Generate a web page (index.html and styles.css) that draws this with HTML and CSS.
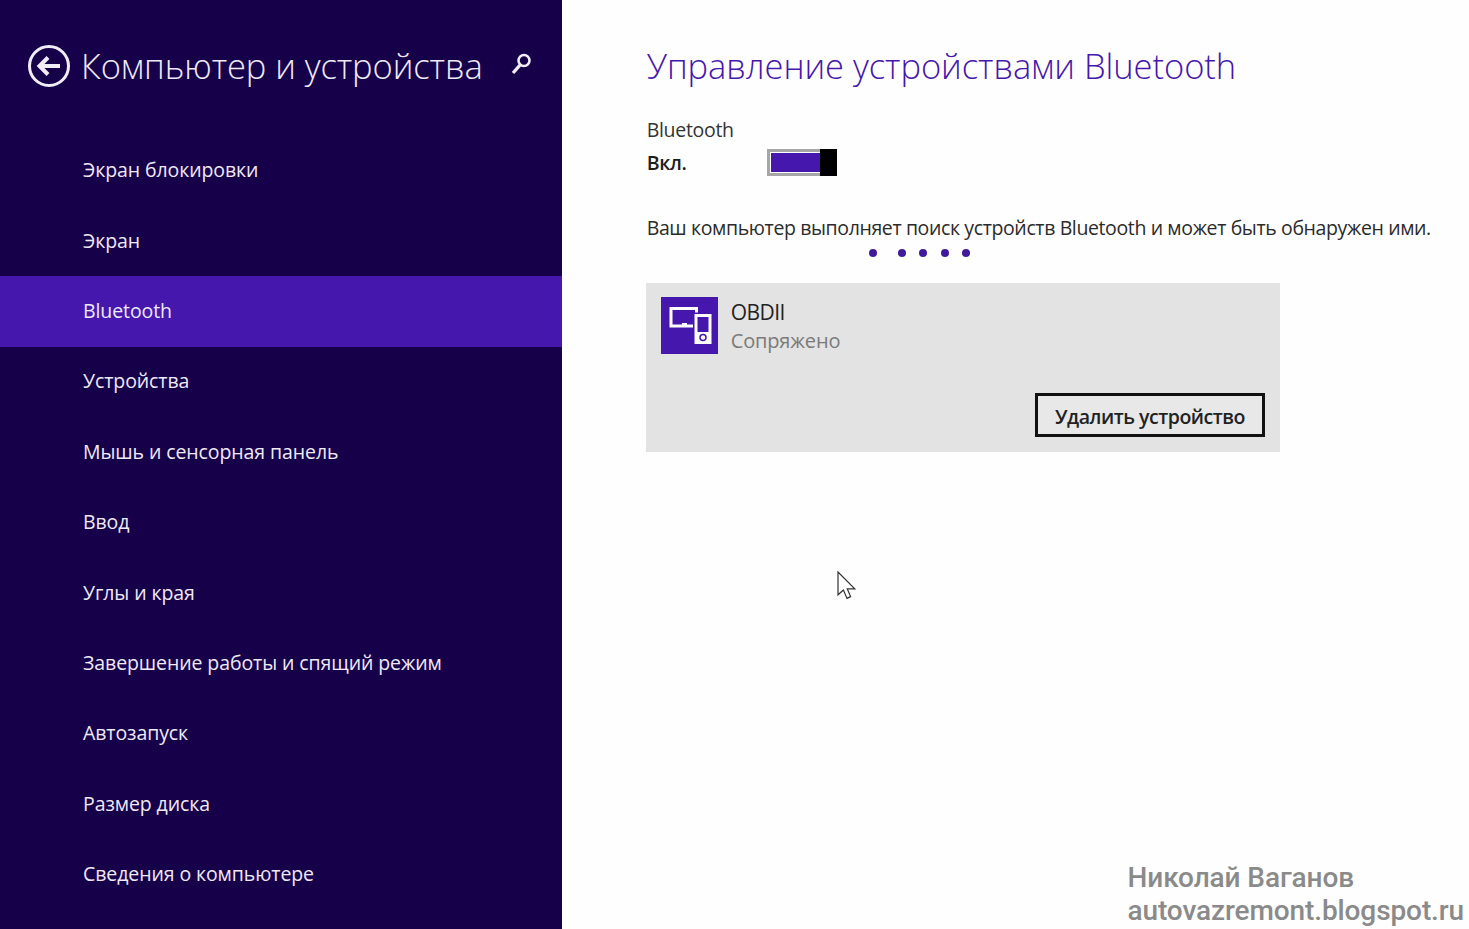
FILE: index.html
```html
<!DOCTYPE html>
<html lang="ru">
<head>
<meta charset="utf-8">
<title>Управление устройствами Bluetooth</title>
<link rel="stylesheet" href="styles.css">
</head>
<body>
<div class="app">
  <aside class="sidebar">
    <header class="side-head">
      <svg class="back" width="44" height="44" viewBox="0 0 44 44" fill="none" stroke="#f1edf7">
        <circle cx="22" cy="22" r="19.500" stroke-width="3"/>
        <path d="M33 22H13M21 13.500 12.500 22l8.500 8.500" stroke-width="4"/>
      </svg>
      <h1 class="side-title">Компьютер и устройства</h1>
      <svg class="search" width="26" height="26" viewBox="0 0 26 26" fill="none" stroke="#f1edf7">
        <circle cx="16" cy="9.500" r="5.500" stroke-width="2.600"/>
        <path d="M12.500 13.500 5 22" stroke-width="3.400"/>
      </svg>
    </header>
    <nav class="nav">
      <a class="nav-item">Экран блокировки</a>
      <a class="nav-item">Экран</a>
      <a class="nav-item active">Bluetooth</a>
      <a class="nav-item">Устройства</a>
      <a class="nav-item">Мышь и сенсорная панель</a>
      <a class="nav-item">Ввод</a>
      <a class="nav-item">Углы и края</a>
      <a class="nav-item">Завершение работы и спящий режим</a>
      <a class="nav-item">Автозапуск</a>
      <a class="nav-item">Размер диска</a>
      <a class="nav-item">Сведения о компьютере</a>
    </nav>
  </aside>
  <main class="content">
    <div class="text-block">
      <h2 class="page-title">Управление устройствами Bluetooth</h2>
      <div class="setting-label">Bluetooth</div>
      <div class="toggle-row">
        <span class="toggle-state">Вкл.</span>
        <span class="toggle"><span class="toggle-fill"></span><span class="toggle-thumb"></span></span>
      </div>
      <p class="status">Ваш компьютер выполняет поиск устройств Bluetooth и может быть обнаружен ими.</p>
      <div class="progress">
        <span class="dot"></span><span class="dot gap"></span><span class="dot"></span><span class="dot"></span><span class="dot"></span>
      </div>
    </div>
    <section class="device">
      <div class="device-top">
        <div class="device-icon">
          <svg width="57" height="57" viewBox="0 0 57 57" fill="none" stroke="#fff">
            <path d="M10 11.500H35.500V29H10Z" stroke-width="3"/>
            <path d="M21 27H26" stroke-width="2"/>
            <path d="M32 15.500H51.500V47.500H32Z" fill="#4617ac" stroke="none"/>
            <path d="M35 18.500H49V45.500H35Z" stroke-width="3"/>
            <path d="M35 35.500H49V45.500H35Z" fill="#fff" stroke-width="1"/>
            <circle cx="42" cy="40.500" r="3" stroke="#4617ac" stroke-width="1.500"/>
          </svg>
        </div>
        <div>
          <div class="device-name">OBDII</div>
          <div class="device-status">Сопряжено</div>
        </div>
      </div>
      <div class="device-actions">
        <button class="remove">Удалить устройство</button>
      </div>
    </section>
  </main>
</div>
<svg class="cursor" width="24" height="36" viewBox="0 0 20 30" fill="#fff" stroke="#333" stroke-width="1">
  <path d="M2.500 2.500V21.500L7 17.500 10 24.500 13 23 10.200 16.500H16.500Z"/>
</svg>
<div class="watermark">Николай Ваганов<br>autovazremont.blogspot.ru</div>
</body>
</html>
```
FILE: styles.css
```css
html, body {
  margin: 0;
  height: 100%;
  overflow: hidden;
  background: #fefefe;
  font-family: "Open Sans", "Noto Sans", sans-serif;
}
.app {
  display: flex;
  height: 929px;
}
.sidebar {
  width: 562px;
  flex: none;
  background: #17004a;
  color: #efeaf6;
}
.side-head {
  height: 135.500px;
  display: flex;
  align-items: center;
  box-sizing: border-box;
  padding: 0 0 4px 27px;
}
.back {
  flex: none;
}
.side-title {
  margin: 0 0 0 10px;
  font-size: 34.500px;
  font-weight: 300;
  letter-spacing: -0.08px;
  white-space: nowrap;
  flex: none;
  width: 427px;
}
.search {
  flex: none;
  margin-top: -3px;
}
.nav {
  display: flex;
  flex-direction: column;
}
.nav-item {
  height: 70.400px;
  box-sizing: border-box;
  display: flex;
  align-items: center;
  padding: 0 0 2px 83px;
  font-size: 19.500px;
  letter-spacing: -0.09px;
}
.nav-item.active {
  background: #4617ac;
}
.content {
  flex: 1;
  padding: 0 0 0 84px;
  color: #222;
}
.text-block {
  padding-left: 0.700px;
}
.page-title {
  margin: 0;
  padding-top: 40px;
  line-height: 52px;
  height: 52px;
  font-size: 34.500px;
  font-weight: 300;
  letter-spacing: -0.05px;
  color: #4617ac;
  white-space: nowrap;
}
.setting-label {
  margin-top: 24px;
  font-size: 19.500px;
  line-height: 28px;
  letter-spacing: -0.3px;
  color: #333;
}
.toggle-row {
  display: flex;
  align-items: center;
  height: 28px;
  margin-top: 4px;
}
.toggle-state {
  width: 120px;
  font-size: 19.500px;
  font-weight: 600;
  letter-spacing: -0.3px;
  color: #1d1d1d;
}
.toggle {
  display: flex;
  width: 70px;
  height: 27px;
  box-sizing: border-box;
  border: 3px solid #a6a6a6;
  border-right: 0;
  padding: 1px 0;
  background: #fff;
}
.toggle-fill {
  flex: 1;
  margin-left: 1px;
  background: #4617ac;
}
.toggle-thumb {
  width: 17px;
  margin: -4px 0;
  background: #000;
}
.status {
  margin: 38px 0 0;
  font-size: 19.500px;
  line-height: 28px;
  letter-spacing: -0.38px;
  color: #2b2b2b;
  white-space: nowrap;
}
.progress {
  display: flex;
  align-items: center;
  height: 10px;
  margin-top: 6px;
  padding-left: 222.500px;
}
.dot {
  width: 8px;
  height: 8px;
  border-radius: 50%;
  background: #3f1a9c;
  margin-right: 13.300px;
}
.dot.gap {
  margin-left: 7.500px;
}
.device {
  width: 634px;
  height: 169px;
  margin-top: 25px;
  background: #e3e3e3;
  box-sizing: border-box;
  padding: 14px 15px 15px 14.700px;
  display: flex;
  flex-direction: column;
  justify-content: space-between;
}
.device-top {
  display: flex;
  gap: 13px;
}
.device-icon {
  width: 57px;
  height: 57px;
  background: #4617ac;
}
.device-icon svg {
  display: block;
}
.device-name {
  font-size: 21px;
  line-height: 30px;
  letter-spacing: -0.55px;
  color: #222;
}
.device-status {
  font-size: 20px;
  line-height: 28px;
  letter-spacing: -0.15px;
  color: #7a7a7a;
}
.device-actions {
  display: flex;
  justify-content: flex-end;
}
.remove {
  width: 230px;
  height: 44px;
  box-sizing: border-box;
  border: 3px solid #111;
  background: #e8e8e8;
  font-family: inherit;
  font-size: 19.500px;
  font-weight: 600;
  letter-spacing: -0.47px;
  color: #222;
  padding: 2px 0 0;
}
.cursor {
  position: absolute;
  left: 835px;
  top: 569px;
}
.watermark {
  position: absolute;
  left: 1127.500px;
  top: 861px;
  font-family: "Roboto", sans-serif;
  font-size: 28px;
  line-height: 33px;
  font-weight: 500;
  color: #8a8a8a;
  white-space: nowrap;
  letter-spacing: -0.1px;
}
```
